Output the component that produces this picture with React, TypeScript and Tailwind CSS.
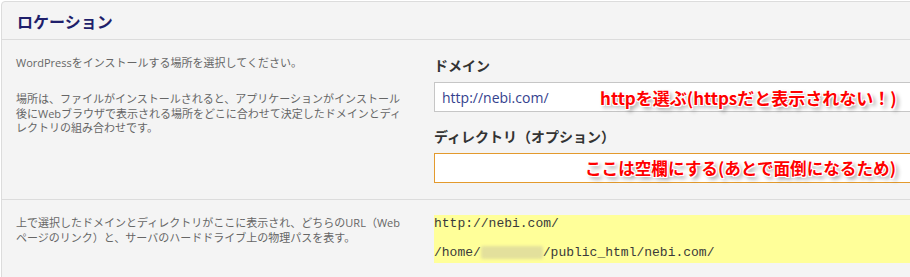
import React from "react";

const jp = "font-['Open_Sans','Noto_Sans_CJK_JP',sans-serif]";
const note =
  "absolute top-1/2 -translate-y-1/2 whitespace-nowrap font-bold leading-none text-[#ff0000] font-['Noto_Sans_CJK_JP',sans-serif] [text-shadow:1px_1px_0_#fff,-1px_-1px_0_#fff,1px_-1px_0_#fff,-1px_1px_0_#fff,0_1px_0_#fff,0_-1px_0_#fff,3px_3px_4px_rgba(0,0,0,0.45)]";

// ロケーション設定パネル
export default function App() {
  return (
    <div className="w-[910px] h-[277px] overflow-hidden bg-white pt-px pl-px">
      <div className="w-[1000px] rounded-tl-[4px] border border-[#dcdcdc] bg-[#f4f4f4]">
        {/* ヘッダー */}
        <div className="flex h-[38px] items-center border-b border-[#dcdcdc] px-[15px]">
          <h2 className="text-[16px] font-bold leading-none text-[#1f1f6b] font-['Noto_Sans_CJK_JP',sans-serif]">
            ロケーション
          </h2>
        </div>

        {/* ドメイン・ディレクトリ */}
        <div className="flex h-[160px] border-b border-[#dcdcdc]">
          <div className={`w-[432px] shrink-0 pl-[14px] pt-[15px] text-[11px] leading-[15px] text-[#666] whitespace-nowrap ${jp}`}>
            <p className="mb-[22px]">WordPressをインストールする場所を選択してください。</p>
            <p className="leading-[14.5px]">
              場所は、ファイルがインストールされると、アプリケーションがインストール
              <br />
              後にWebブラウザで表示される場所をどこに合わせて決定したドメインとディ
              <br />
              レクトリの組み合わせです。
            </p>
          </div>
          <div className="flex-1 pt-[15px]">
            <label className="mb-[7px] block text-[14px] font-semibold leading-[20px] text-[#333] font-['Noto_Sans_CJK_JP',sans-serif]">
              ドメイン
            </label>
            <div className="relative flex h-[30px] items-center border border-[#c6c6c6] bg-white pl-[7px]">
              <span className="text-[14px] text-[#34428e] font-['Open_Sans',sans-serif]">http://nebi.com/</span>
              <span className={`${note} left-[165px] text-[17px]`}>httpを選ぶ(httpsだと表示されない！)</span>
            </div>
            <label className="mb-[7px] mt-[14px] block text-[14px] font-semibold leading-[20px] text-[#333] font-['Noto_Sans_CJK_JP',sans-serif]">
              ディレクトリ（オプション）
            </label>
            <div className="relative h-[30px] border border-[#e39a2d] bg-white">
              <span className={`${note} left-[150px] text-[16.6px]`}>ここは空欄にする(あとで面倒になるため)</span>
            </div>
          </div>
        </div>

        {/* パス表示 */}
        <div className="flex h-[80px]">
          <div className={`w-[432px] shrink-0 pl-[14px] pt-[15px] text-[11px] leading-[15px] text-[#666] whitespace-nowrap ${jp}`}>
            上で選択したドメインとディレクトリがここに表示され、どちらのURL（Web
            <br />
            ページのリンク）と、サーバのハードドライブ上の物理パスを表す。
          </div>
          <div className="flex-1 pt-[15px]">
            <div className="h-[48px] bg-[#ffff99] text-[13px] leading-[18px] text-[#3a3a3a] font-['Liberation_Mono',monospace] whitespace-nowrap">
              <p>http://nebi.com/</p>
              <p className="mt-[11px]">
                /home/
                <span className="inline-block h-[13px] w-[62px] rounded-[2px] bg-[#e3e09c] align-middle blur-[1.5px]" />
                /public_html/nebi.com/
              </p>
            </div>
          </div>
        </div>
      </div>
    </div>
  );
}
